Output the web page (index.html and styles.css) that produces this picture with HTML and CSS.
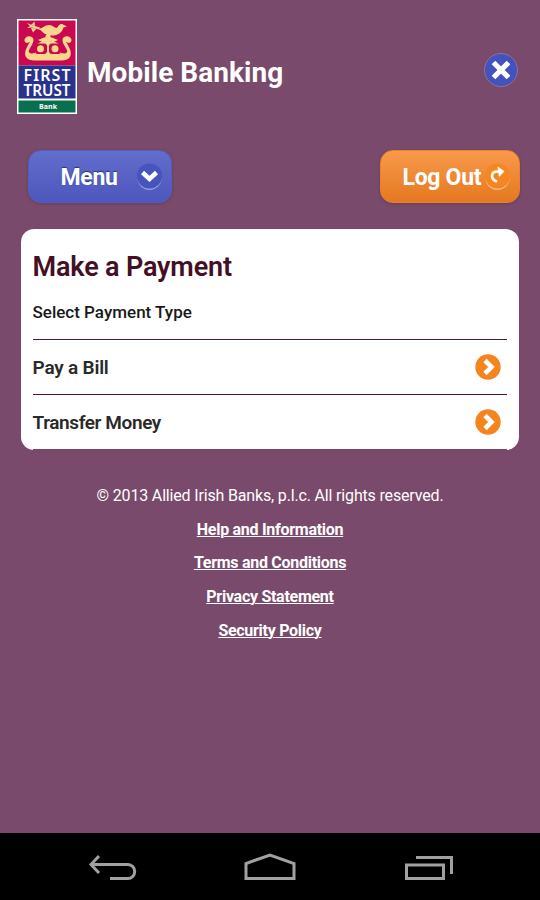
FILE: index.html
```html
<!DOCTYPE html>
<html lang="en">
<head>
<meta charset="utf-8">
<title>Mobile Banking</title>
<link rel="stylesheet" href="styles.css">
</head>
<body>
<div class="screen">
  <header class="header">
    <svg class="logo" viewBox="0 0 60 95">
      <rect width="60" height="95" fill="#fff"/>
      <rect x="1.5" y="1.5" width="57" height="45" fill="#c90850"/>
      <rect x="1.5" y="46.5" width="57" height="33" fill="#29328c"/>
      <rect x="1.5" y="81.5" width="57" height="12" fill="#08704f"/>
      <g fill="#f9d58d">
        <path d="M20 9C25 11 27 6 32 6C36 6 37 9 40 9C42 4.500 45 4 47 6L50 7.500L46.500 8.500C45 14 40 17 34 16.500C26 16 26 12 20 9Z"/>
        <path d="M10 4L16 6.500L23 8.500L22 10.500L15 8.500L10 9L13 7Z"/>
        <path d="M14 6L17.500 2.500L18 7ZM14 9L16 13.500L19.500 9.500Z"/>
        <path d="M29 16H33L34 19H28Z"/>
        <path d="M21 21L27 18.500H35L41 21L36 23.500H26Z"/>
        <path d="M15 18C8 15 5 23 10 24L13 23C6 33 6 41 17 41.500H45C56 41 56 33 49 23L52 24C57 23 54 15 47 18C43 21 48 27 50 31C51 34 49 35 44 34V28Q42 24 38 23H24Q20 24 18 28V34C13 35 11 34 12 31C14 27 19 21 15 18Z"/>
      </g>
      <g fill="#c90850"><rect x="18" y="24.500" width="12" height="10.500" rx="3"/><rect x="32" y="24.500" width="12" height="10.500" rx="3"/></g>
      <g fill="#f9d58d"><circle cx="23.500" cy="29.700" r="3.500"/><circle cx="38" cy="29.700" r="3.500"/></g>
      <g class="logo-text" fill="#fff">
        <text x="6.500" y="62.200" font-size="16" textLength="47" lengthAdjust="spacing">FIRST</text>
        <text x="6.500" y="77" font-size="16" textLength="47" lengthAdjust="spacingAndGlyphs">TRUST</text>
      </g>
      <text class="logo-bank" x="22" y="90" font-size="7" textLength="18" fill="#fff">Bank</text>
    </svg>
    <h1 class="brand">Mobile Banking</h1>
    <svg class="close" viewBox="0 0 36 36"><circle cx="18" cy="18" r="16.500" fill="#4352bd" stroke="#9a6b98"/><path d="M10.500 10.500L25.500 25.500M25.500 10.500L10.500 25.500" stroke="#fff" stroke-width="5.200"/></svg>
  </header>

  <nav class="actions">
    <button class="btn menu"><span>Menu</span>
      <svg class="btn-icon" viewBox="0 0 27 28"><circle cx="13.500" cy="14.500" r="12.300" fill="#a0a4e4"/><circle cx="13.500" cy="13" r="12.600" fill="#4854bd"/><path d="M6.500 9.500L13.500 16L20.500 9.500" fill="none" stroke="#fff" stroke-width="4.500"/></svg>
    </button>
    <button class="btn logout"><span>Log Out</span>
      <svg class="btn-icon" viewBox="0 0 27 28"><circle cx="13.500" cy="14.500" r="12.300" fill="#ffc188"/><circle cx="13.500" cy="13" r="12.600" fill="#f68620"/><path d="M13.200 18.500C6 16.500 6.500 8.500 13.500 8.500H16" fill="none" stroke="#fff" stroke-width="2.600"/><path d="M13.500 3.500L20.500 8.300L15 14Z" fill="#fff"/></svg>
    </button>
  </nav>

  <main class="card">
    <h2 class="title">Make a Payment</h2>
    <p class="subtitle">Select Payment Type</p>
    <div class="row"><span class="bill">Pay a Bill</span>
      <svg class="arrow" viewBox="0 0 26 26"><circle cx="13" cy="13" r="12.700" fill="#f5841f"/><path d="M10 6.500L16.500 13L10 19.500" fill="none" stroke="#fff" stroke-width="4.600"/></svg>
    </div>
    <div class="row"><span>Transfer Money</span>
      <svg class="arrow" viewBox="0 0 26 26"><circle cx="13" cy="13" r="12.700" fill="#f5841f"/><path d="M10 6.500L16.500 13L10 19.500" fill="none" stroke="#fff" stroke-width="4.600"/></svg>
    </div>
    <div class="end-line"></div>
  </main>

  <footer class="footer">
    <p>© 2013 Allied Irish Banks, p.l.c. All rights reserved.</p>
    <a>Help and Information</a>
    <a>Terms and Conditions</a>
    <a>Privacy Statement</a>
    <a>Security Policy</a>
  </footer>

  <div class="system-bar">
    <svg viewBox="0 0 180 67"><path d="M99 23L91 31.500L99 40M91 31.500H128A6.700 7 0 0 1 128 45.500H110"/></svg>
    <svg viewBox="180 0 180 67"><path d="M246 45.500V30.500L270 22L294 30.500V45.500Z"/></svg>
    <svg viewBox="360 0 180 67"><path d="M406.500 32H443.500V45.500H406.500ZM416 24.500H451.500V41"/></svg>
  </div>
</div>
</body>
</html>
```
FILE: styles.css
```css
* { box-sizing: border-box; }
body { margin: 0; background: #794a6b; font-family: Roboto, sans-serif; color: #fff; }
h1, h2, p { margin: 0; }
svg { display: block; flex: none; }
.screen { width: 540px; height: 900px; display: flex; flex-direction: column; overflow: hidden; }
.header { height: 114px; padding: 19px 21.500px 0 17px; display: flex; align-items: flex-start; }
.logo { width: 60px; height: 95px; }
.logo-text { font-family: "Noto Sans", sans-serif; font-weight: 600; }
.logo-bank { font-family: "Open Sans", sans-serif; font-weight: 700; }
.brand { margin: 37px auto 0 10px; font-size: 28px; line-height: 34px; font-weight: 700; letter-spacing: 0.05px; white-space: nowrap; }
.close { width: 36px; height: 36px; margin-top: 33px; }
.actions { height: 115px; padding: 36px 20.500px 0 27.500px; display: flex; justify-content: space-between; align-items: flex-start; }
.btn { height: 53px; border-radius: 13px; padding: 0; display: flex; align-items: center; font: 700 23px/28px Roboto, sans-serif; letter-spacing: -0.3px; color: #fff; white-space: nowrap; box-shadow: 0 1px 3px #64405a; }
.btn span { padding-top: 2px; }
.menu { width: 144px; padding-left: 32px; border: 1.500px solid #515dc0; background: linear-gradient(#636dcb, #4d57bd); text-shadow: 0 -1px 1px #1c3881; }
.logout { width: 140px; padding-left: 22px; border: 1.500px solid #ed8128; background: linear-gradient(#f89a4b, #e47820); }
.btn-icon { width: 27px; height: 28px; margin: 1px 7.500px 0 auto; }
.card { height: 221px; margin: 0 21px; padding: 0 12px 0 11.500px; background: #fff; border-radius: 13px; box-shadow: 0 0 1px #703360; }
.title { padding-top: 21px; font-size: 27px; line-height: 34px; font-weight: 600; letter-spacing: -0.16px; color: #440f25; }
.subtitle { height: 55px; padding-top: 17px; font-size: 17px; line-height: 22px; font-weight: 500; color: #17191b; }
.row { height: 55px; border-top: 1px solid #500d43; display: flex; align-items: center; justify-content: space-between; font-size: 19px; font-weight: 600; letter-spacing: -0.4px; color: #292929; }
.bill { letter-spacing: -0.2px; }
.row:first-of-type { border-color: #4b1940; }
.arrow { width: 26px; height: 26px; margin-right: 6px; }
.end-line { height: 1px; background: #794a6b; }
.footer { height: 383px; padding-top: 34px; display: flex; flex-direction: column; align-items: center; gap: 9.700px; font-size: 16px; line-height: 24px; letter-spacing: -0.165px; }
.footer a { font-weight: 700; letter-spacing: -0.28px; text-decoration: underline; text-decoration-thickness: 1px; text-underline-offset: 1px; }
.system-bar { height: 67px; background: #000; display: flex; }
.system-bar svg { width: 180px; height: 67px; }
.system-bar path { fill: none; stroke: #a1a1a1; stroke-width: 3; }
```
